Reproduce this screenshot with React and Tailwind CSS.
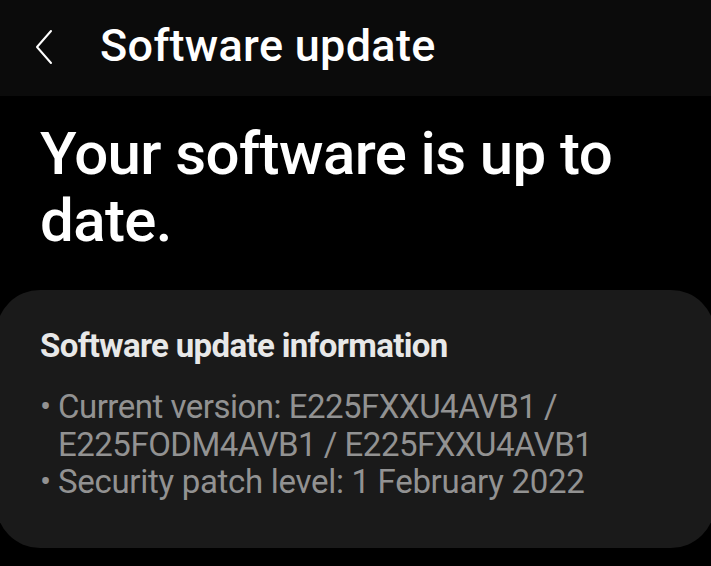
export default function App() {
  return (
    <div className="w-[711px] h-[566px] bg-black overflow-hidden" style={{ fontFamily: "Roboto, 'Noto Sans', sans-serif" }}>
      <div className="h-[96px] bg-[#0b0b0b] flex items-center">
        <svg width="22" height="40" viewBox="0 0 22 40" className="ml-[33px] mt-[-2px]">
          <path d="M18 4 L4 20 L18 36" fill="none" stroke="#ffffff" strokeWidth="2" strokeLinecap="round" strokeLinejoin="round" />
        </svg>
        <h1 className="ml-[45px] text-[45px] text-white font-medium tracking-[0.3px] mt-[-4px]">Software update</h1>
      </div>
      <div className="px-[40px] pt-[24px] text-[60px] leading-[67px] text-white font-medium tracking-[-0.6px]">
        Your software is up to date.
      </div>
      <div className="mt-[36px] -mx-[4px] h-[258px] bg-[#1a1a1a] rounded-[44px] px-[44px] pt-[36px]">
        <div className="text-[33px] font-bold text-[#e8e8e8] tracking-[-0.65px] leading-[40px]">Software update information</div>
        <ul className="mt-[22px] text-[33px] text-[#929292] leading-[37.5px] tracking-[-0.5px]">
          <li className="flex">
            <span className="w-[18px] shrink-0">•</span>
            <span>Current version: E225FXXU4AVB1 / E225FODM4AVB1 / E225FXXU4AVB1</span>
          </li>
          <li className="flex">
            <span className="w-[18px] shrink-0">•</span>
            <span className="tracking-[-0.3px]">Security patch level: 1 February 2022</span>
          </li>
        </ul>
      </div>
    </div>
  );
}
